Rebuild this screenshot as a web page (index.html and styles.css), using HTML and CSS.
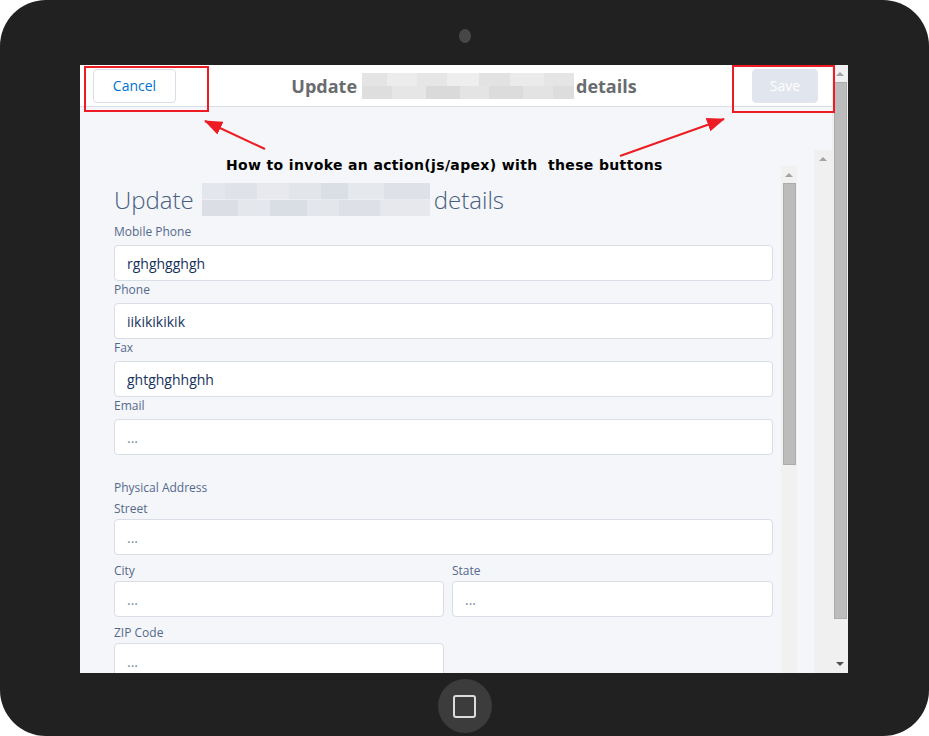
FILE: index.html
```html
<!DOCTYPE html>
<html lang="en">
<head>
    <meta charset="UTF-8">
    <meta name="viewport" content="width=device-width, initial-scale=1.0">
    <title>Update details - Tablet preview</title>
    <link rel="stylesheet" href="styles.css">
</head>
<body>
    <div class="tablet">
        <div class="camera"></div>

        <div class="screen">
            <div class="app">
                <header class="app-header">
                    <button class="btn btn-neutral">Cancel</button>
                    <h1 class="app-title">Update <span class="blur blur-head"></span> details</h1>
                    <button class="btn btn-brand" disabled>Save</button>
                </header>

                <div class="app-body">
                    <div class="panel">
                        <form class="form">
                            <h2 class="form-title">Update <span class="blur blur-title"></span> details</h2>

                            <div class="field">
                                <label>Mobile Phone</label>
                                <input type="text" value="rghghgghgh">
                            </div>
                            <div class="field">
                                <label>Phone</label>
                                <input type="text" value="iikikikikik">
                            </div>
                            <div class="field">
                                <label>Fax</label>
                                <input type="text" value="ghtghghhghh">
                            </div>
                            <div class="field">
                                <label>Email</label>
                                <input type="text" placeholder="...">
                            </div>

                            <div class="section-title">Physical Address</div>
                            <div class="address">
                                <div class="field wide">
                                    <label>Street</label>
                                    <input type="text" placeholder="...">
                                </div>
                                <div class="field">
                                    <label>City</label>
                                    <input type="text" placeholder="...">
                                </div>
                                <div class="field">
                                    <label>State</label>
                                    <input type="text" placeholder="...">
                                </div>
                                <div class="field">
                                    <label>ZIP Code</label>
                                    <input type="text" placeholder="...">
                                </div>
                            </div>
                        </form>
                        <div class="scrollbar inner-bar">
                            <span class="arrow arrow-up"></span>
                            <span class="thumb"></span>
                        </div>
                    </div>
                    <div class="gutter"></div>
                    <div class="scrollbar track-bar">
                        <span class="arrow arrow-up"></span>
                    </div>
                </div>
            </div>

            <div class="scrollbar page-bar">
                <span class="arrow arrow-up"></span>
                <span class="thumb"></span>
                <span class="arrow arrow-down"></span>
            </div>
        </div>

        <div class="home"><span class="home-square"></span></div>

        <!-- annotation layer drawn over the screenshot -->
        <svg class="annotations" width="929" height="736" viewBox="0 0 929 736">
            <defs>
                <marker id="head" markerUnits="userSpaceOnUse" markerWidth="18" markerHeight="14" refX="17" refY="7" orient="auto">
                    <path d="M0 0 L18 7 L0 14 Z" fill="#ed1c24"/>
                </marker>
            </defs>
            <rect x="85" y="67" width="123" height="44" fill="none" stroke="#ed1c24" stroke-width="2"/>
            <rect x="733" y="66" width="101" height="46" fill="none" stroke="#ed1c24" stroke-width="2"/>
            <line x1="265" y1="149" x2="205" y2="121" stroke="#ed1c24" stroke-width="2" marker-end="url(#head)"/>
            <line x1="620" y1="156" x2="724" y2="119" stroke="#ed1c24" stroke-width="2" marker-end="url(#head)"/>
        </svg>
        <p class="note">How to invoke an action(js/apex) with  these buttons</p>
    </div>
</body>
</html>
```

FILE: styles.css
```css
body {
    margin: 0;
    background: #ffffff;
    font-family: "Open Sans", "Noto Sans", Arial, sans-serif;
}
.tablet {
    position: relative;
    width: 929px;
    height: 736px;
    background: #212121;
    border-radius: 46px;
    display: flex;
    flex-direction: column;
    align-items: center;
    overflow: hidden;
}
.camera {
    width: 12px;
    height: 14px;
    margin-top: 29px;
    border-radius: 50%;
    background: #474747;
}
.screen {
    align-self: flex-start;
    margin: 22px 0 0 80px;
    width: 768px;
    height: 608px;
    display: flex;
    background: #f4f6f9;
    overflow: hidden;
}
.app {
    flex: 1;
    display: flex;
    flex-direction: column;
    min-width: 0;
}
.app-header {
    height: 41px;
    flex: none;
    display: flex;
    align-items: center;
    padding: 0 14px 0 13px;
    background: #ffffff;
    border-bottom: 1px solid #d8dde6;
}
.btn {
    height: 34px;
    border-radius: 4px;
    font-family: inherit;
    font-size: 14px;
    padding: 0 16px;
    border: 1px solid #d8dde6;
}
.btn-neutral {
    background: #ffffff;
    color: #0070d2;
    width: 83px;
}
.btn-brand {
    background: #e0e5ee;
    border-color: #e0e5ee;
    color: #ffffff;
    width: 66px;
}
.app-title {
    flex: 1;
    margin: 0;
    text-align: center;
    font-size: 18px;
    font-weight: 700;
    color: #696b6f;
    display: flex;
    justify-content: center;
    align-items: center;
}
.blur {
    display: inline-block;
    vertical-align: middle;
}
.blur-head {
    width: 212px;
    height: 26px;
    margin: 0 2px 0 5px;
    background:
        linear-gradient(90deg, #e4e4e4 0 12%, #ececec 12% 26%, #e6e6e6 26% 40%, #eeeeee 40% 55%, #e2e2e2 55% 70%, #ebebeb 70% 86%, #e5e5e5 86%) top / 100% 50% no-repeat,
        linear-gradient(90deg, #dedede 0 14%, #e6e6e6 14% 30%, #dadada 30% 46%, #e4e4e4 46% 60%, #dcdcdc 60% 76%, #e3e3e3 76% 90%, #dddddd 90%) bottom / 100% 50% no-repeat;
}
.app-body {
    flex: 1;
    display: flex;
    padding-top: 43px;
    min-height: 0;
}
.panel {
    width: 717px;
    margin-top: 16px;
    display: flex;
    flex: none;
}
.gutter {
    width: 17px;
    flex: none;
}
.form {
    width: 701px;
    box-sizing: border-box;
    padding: 17px 8px 0 34px;
    margin: 0;
}
.form-title {
    margin: 0 0 7px;
    font-size: 24px;
    line-height: 32px;
    font-weight: 300;
    color: #475d80;
    display: flex;
    align-items: center;
}
.blur-title {
    width: 228px;
    height: 33px;
    margin: 0 4px 0 8px;
    background:
        linear-gradient(90deg, #e3e6ec 0 10%, #dfe2e8 10% 24%, #e7e9ee 24% 38%, #e2e5ea 38% 52%, #dadee5 52% 64%, #e5e8ec 64% 80%, #dee1e7 80%) top / 100% 50% no-repeat,
        linear-gradient(90deg, #dbdee5 0 16%, #e4e7ec 16% 30%, #d9dde4 30% 46%, #e3e6eb 46% 60%, #dde0e6 60% 78%, #e6e8ed 78%) bottom / 100% 50% no-repeat;
}
.field label {
    display: block;
    font-size: 12px;
    line-height: 18px;
    margin-bottom: 4px;
    color: #54698d;
}
.field input {
    display: block;
    width: 100%;
    box-sizing: border-box;
    height: 36px;
    padding: 0 12px;
    border: 1px solid #d8dde6;
    border-radius: 4px;
    background: #ffffff;
    font-family: inherit;
    font-size: 14px;
    color: #16325c;
}
.field input::placeholder {
    color: #7d899c;
}
.section-title {
    margin-top: 26px;
    font-size: 12px;
    line-height: 14px;
    color: #54698d;
}
.address {
    margin-top: 5px;
    display: grid;
    grid-template-columns: 330px 1fr;
    column-gap: 8px;
    row-gap: 7px;
}
.address .wide {
    grid-column: 1 / -1;
}
.address .field label {
    margin-bottom: 1px;
}

/* fake scrollbars */
.scrollbar {
    width: 16px;
    flex: none;
    background: #f1f1f1;
    display: flex;
    flex-direction: column;
    align-items: center;
}
.track-bar {
    width: 18px;
    background: #f0f0f0;
}
.page-bar {
    background: #f0f0f0;
}
.arrow {
    width: 0;
    height: 0;
    border-left: 4px solid transparent;
    border-right: 4px solid transparent;
}
.arrow-up {
    border-bottom: 4px solid #a3a3a3;
    margin: 7px 0 6px;
}
.arrow-down {
    border-top: 4px solid #505050;
    margin: auto 0 7px;
}
.thumb {
    width: 11px;
    background: #bcbcbc;
    border: 1px solid #acacac;
}
.inner-bar .thumb {
    height: 280px;
}
.page-bar .thumb {
    height: 535px;
}

.home {
    margin-top: 6px;
    width: 54px;
    height: 54px;
    border-radius: 50%;
    background: #3c3c3c;
    display: flex;
    align-items: center;
    justify-content: center;
}
.home-square {
    width: 19px;
    height: 19px;
    border: 2px solid #dcdcdc;
    border-radius: 3px;
}

.annotations {
    position: absolute;
    left: 0;
    top: 0;
    pointer-events: none;
}
.note {
    position: absolute;
    left: 226px;
    top: 155px;
    margin: 0;
    white-space: pre;
    font-family: "DejaVu Sans", Verdana, sans-serif;
    font-weight: 700;
    font-size: 14px;
    letter-spacing: 0.35px;
    line-height: 20px;
    color: #000000;
}
```
